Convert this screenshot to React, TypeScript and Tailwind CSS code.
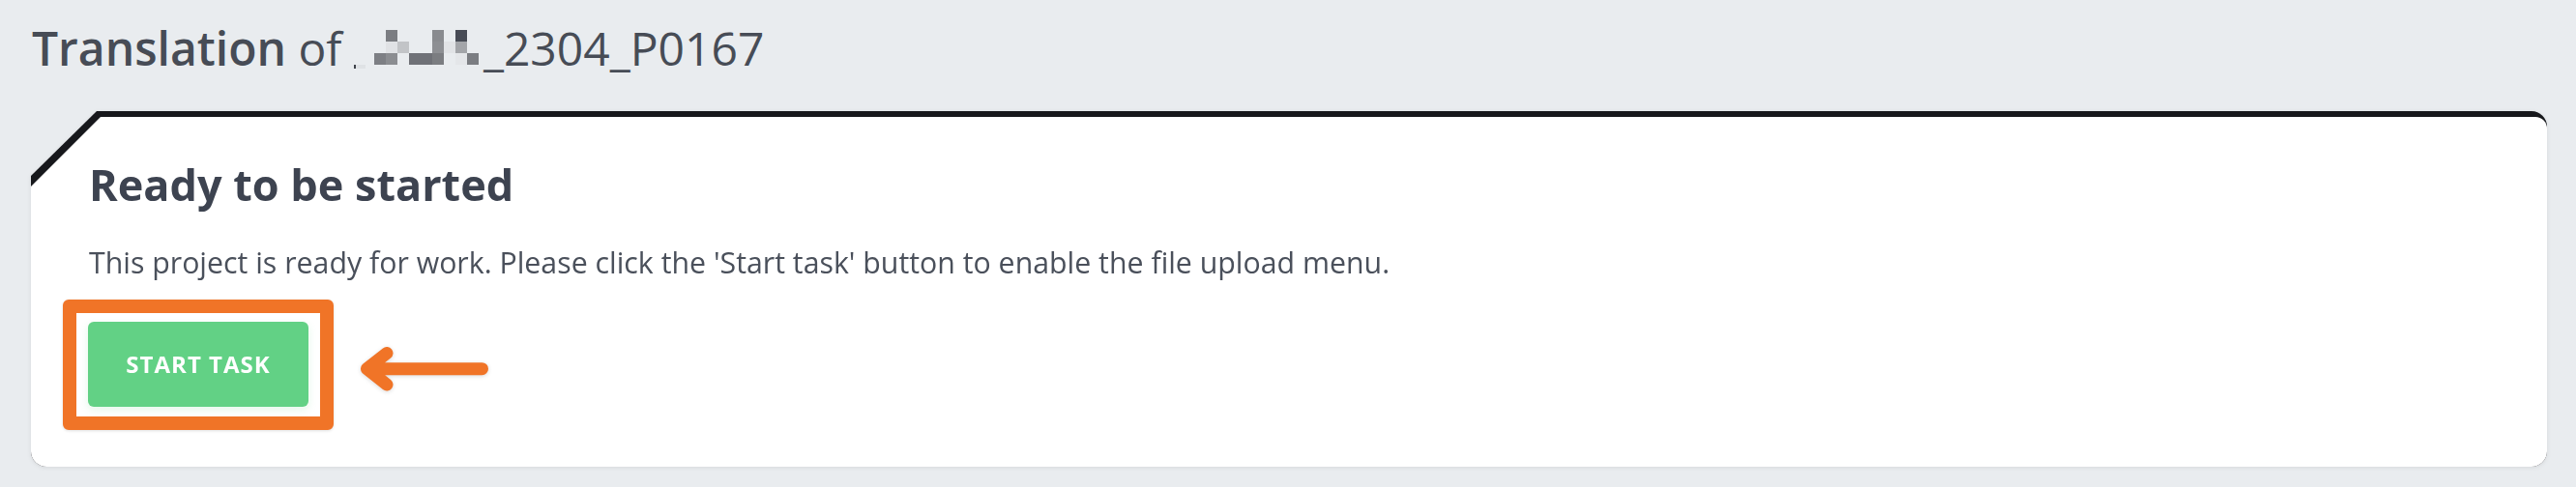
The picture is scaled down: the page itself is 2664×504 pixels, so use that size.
import React from "react";

const BLOB: (string | null)[][] = [
  [null, "#7b7d82", null, null, null, "#898b8f", null, "#474b55", null],
  [null, "#e0e2e5", "#c2c4c7", null, null, "#8d8f93", "#e1e3e6", "#a3a5a9", null],
  ["#7d7f84", "#8b8d91", null, "#6f7177", "#6f7177", "#7b7d81", null, "#e4e6e9", "#7b7d82"],
];

function Blob() {
  return (
    <span className="inline-flex items-end align-[-3px] mr-[5px]">
      <span className="inline-block w-[12px] h-[4px] bg-[#dfe2e5] mb-[-4px] mr-[9px] border-l-[2px] border-[#3f434b]" />
      <span className="inline-grid grid-cols-[repeat(9,12px)] grid-rows-[repeat(3,12px)]">
        {BLOB.flatMap((row, r) =>
          row.map((c, i) => (
            <span
              key={`${r}-${i}`}
              className="block w-[12px] h-[12px]"
              style={{ backgroundColor: c ?? "transparent" }}
            />
          ))
        )}
      </span>
    </span>
  );
}

export default function App() {
  return (
    <div className="w-full h-[504px] bg-[#e9ecef] font-['Open_Sans','Noto_Sans',sans-serif] overflow-hidden">
      <h1 className="pl-[33px] pt-[18px] text-[48px] leading-[64px] text-[#474c56] font-normal whitespace-nowrap">
        <span className="font-semibold">Translation</span> of <Blob />
        _2304_P0167
      </h1>

      <div className="mt-[33px] ml-[32px] mr-[30px] [filter:drop-shadow(0_1px_2px_rgba(0,0,0,0.08))]">
        <div className="rounded-2xl bg-[#17181c] pt-[6px] [clip-path:polygon(68px_0,100%_0,100%_100%,0_100%,0_67px)]">
          <div className="h-[362px] rounded-b-2xl rounded-tr-[12px] bg-white pl-[60px] pt-[40px] [clip-path:polygon(72px_0,100%_0,100%_100%,0_100%,0_72px)]">
            <h2 className="text-[45px] leading-[60px] font-bold text-[#3d4350]">
              Ready to be started
            </h2>
            <p className="mt-[31px] text-[30.3px] leading-[40px] text-[#4a505b] whitespace-nowrap">
              This project is ready for work. Please click the 'Start task' button to enable the file upload menu.
            </p>
            <div className="mt-[18px] -ml-[27px] flex items-center">
              <div className="rounded-[6px] border-[14px] border-[#f07427] bg-white px-[12px] pt-[9px] pb-[10px] shadow-[0_1px_3px_rgba(0,0,0,0.12)]">
                <button className="flex h-[88px] w-[228px] items-center justify-center rounded-[6px] bg-[#62d185] text-[24px] font-bold tracking-[1px] text-white shadow-[0_3px_8px_rgba(98,209,133,0.18)]">
                  START TASK
                </button>
              </div>
              <svg
                width="150"
                height="64"
                viewBox="0 0 150 64"
                className="ml-[18px] [filter:drop-shadow(0_1px_2px_rgba(0,0,0,0.15))]"
              >
                <path
                  d="M135.5 35.7 H16.5 M37 19.5 L16.5 35.7 L37 52"
                  fill="none"
                  stroke="#f07427"
                  strokeWidth="13"
                  strokeLinecap="round"
                  strokeLinejoin="round"
                />
              </svg>
            </div>
          </div>
        </div>
      </div>
    </div>
  );
}
